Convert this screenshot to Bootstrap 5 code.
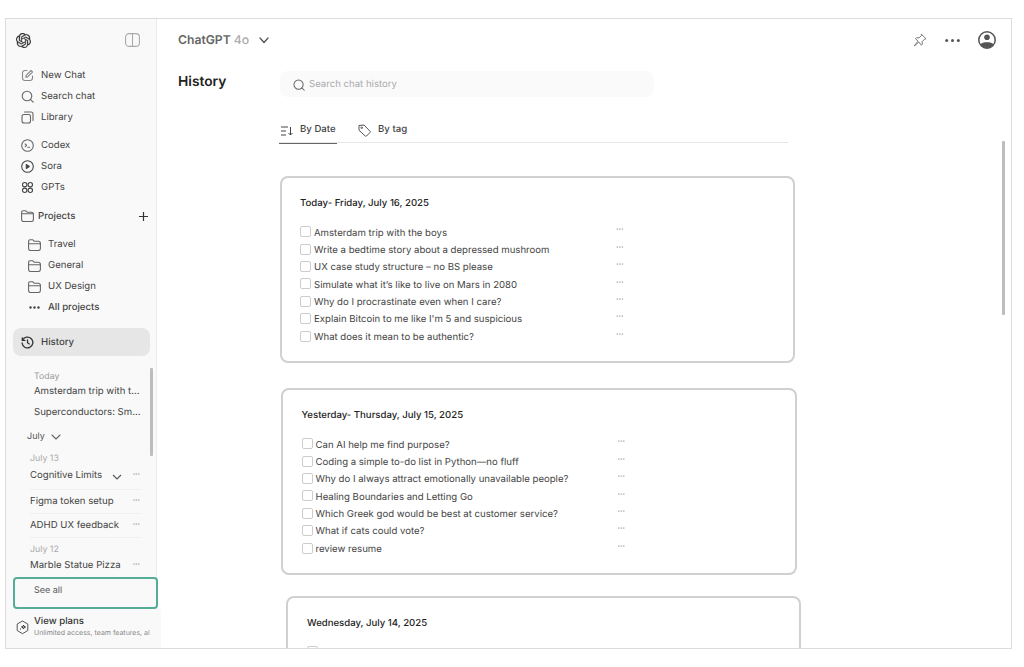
<!DOCTYPE html>
<html lang="en">
<head>
<meta charset="UTF-8">
<meta name="viewport" content="width=device-width, initial-scale=1.0">
<title>History</title>
<link href="https://cdn.jsdelivr.net/npm/bootstrap@5.3.0/dist/css/bootstrap.min.css" rel="stylesheet">
<style>
html, body { height: 100%; overflow: hidden; background: #fff; }
body { font-family: Inter, "Liberation Sans", sans-serif; color: #333; font-size: 9.6px; text-rendering: geometricPrecision; }
svg { display: block; flex: none; }
.ic { fill: none; stroke: #666; stroke-width: 1.1; stroke-linecap: round; stroke-linejoin: round; }
.app-frame { position: relative; width: 1007px; height: 631px; margin: 18px 0 0 5px; border: 1px solid #dcdcdc; overflow: hidden; }
.side-col { width: 151px; flex: none; background: #f9f9f9; border-right: 1px solid #ececec; height: 100%; position: relative; }
.side-top { height: 46px; padding: 0 16px 4px 10px; }
.side-row { height: 21px; padding-left: 15px; padding-top: 2px; gap: 7px; color: #444; white-space: nowrap; }
.side-row svg, .hist-pill svg { margin-bottom: 2px; }
.side-row.proj { padding-left: 15px; gap: 4px; padding-right: 8px; font-weight: 500; }
.side-row.sub { padding-left: 22px; gap: 7px; }
.side-row.allp { font-weight: 500; }
.sect-gap { margin-top: 7px; }
.sect-gap2 { margin-top: 7.5px; }
.hist-pill { height: 28px; margin: 10px 6px 0 7px; padding-left: 8px; padding-top: 2px; gap: 7px; background: #e6e6e6; border-radius: 8px; font-weight: 500; color: #444; }
.hist-day { height: 15px; padding-left: 28px; padding-top: 2px; font-size: 8.8px; color: #999; }
.hist-day.d2 { padding-left: 24px; color: #aaa; }
.hist-item { height: 16px; padding-left: 28px; padding-top: 2px; color: #444; white-space: nowrap; }
.hist-month { height: 16px; padding-left: 21px; gap: 6px; font-size: 9px; color: #555; margin-top: 8px; }
.hist-line { height: 24px; margin: 0 15px 0 24px; padding-top: 2px; border-bottom: 1px solid #efefef; color: #444; white-space: nowrap; }
.hist-line.first { height: 16px; margin-top: 2px; border-bottom: 0; }
.hist-line.second { height: 25px; margin-top: 5px; border-top: 1px solid #efefef; }
.hist-line.last { border-bottom: 0; height: 17px; margin-top: 0; }
.more-dots { color: #666; font-size: 8.500px; line-height: 1; margin-left: auto; margin-right: 1px; position: relative; top: -1px; }
.see-all { height: 32px; width: 145px; margin: 3px 0 0 7px; border: 2px solid #55ad97; border-radius: 4px; background: #f9f9f9; padding: 5px 0 0 19px; font-size: 9px; color: #555; position: relative; }
.plans-box { width: 155px; height: 39px; background: #f9f9f9; padding: 7px 0 0 10px; gap: 5px; }
.plans-name { font-size: 9.6px; font-weight: 500; color: #333; line-height: 12px; }
.plans-sub { font-size: 7px; color: #888; line-height: 9px; width: 117px; overflow: hidden; white-space: nowrap; }
.main-col { min-width: 0; position: relative; }
.top-bar { height: 42px; padding: 0 15px 0 21px; }
.model-name { font-size: 12.2px; font-weight: 600; color: #666; }
.model-name span { font-weight: 500; color: #aaa; }
.page-title { width: 101px; font-size: 13.8px; font-weight: 600; color: #222; padding-top: 1px; line-height: 20px; }
.page-body { padding-left: 21px; padding-top: 10px; min-height: 0; }
.search-box { width: 374px; height: 26px; background: #fafafa; border-radius: 8px; padding-left: 13px; padding-top: 2px; gap: 4px; color: #aaa; margin-left: 1px; }
.tab-bar { width: 509px; margin-top: 20px; height: 26px; border-bottom: 1px solid #e6e6e6; gap: 21px; flex-wrap: nowrap; }
.tab-item { height: 26px; padding-right: 1px; padding-top: 1px; gap: 7px; color: #444; font-weight: 500; white-space: nowrap; }
.tab-item.on { border-bottom: 1px solid #666; height: 27px; width: 58px; padding-left: 2px; gap: 7px; }
.day-card { width: 515px; height: 187px; border: 2px solid #d0d0d0; border-radius: 8px; padding: 18.500px 18.500px 0; background: #fff; flex: none; }
.day-card.c1 { margin: 33px 0 0 1px; padding-left: 18px; }
.day-card.c2 { margin: 25px 0 0 2px; width: 516px; }
.day-card.c3 { margin: 21px 0 0 7px; padding-left: 19px; }
.day-title { font-size: 9.6px; font-weight: 500; color: #222; line-height: 14px; margin-bottom: 14.500px; }
.chat-row { height: 17.4px; color: #444; white-space: nowrap; }
.chat-row .form-check-input { width: 11px; height: 11px; margin: 0 3px 0 0; border-color: #ccc; border-radius: 2px; position: relative; top: -2px; flex: none; }
.chat-name { width: 302px; flex: none; }
.row-dots { color: #666; font-size: 8.500px; line-height: 1; position: relative; top: -3px; }
.scroll-thumb { position: absolute; background: #bdbdbd; width: 3px; border-radius: 1px; }
.scroll-thumb.s1 { left: 144px; top: 349px; height: 88px; }
.scroll-thumb.s2 { left: 996px; top: 122px; height: 174px; }
</style>
</head>
<body>
<div class="app-frame d-flex">

  <aside class="side-col">
    <div class="side-top d-flex align-items-center justify-content-between">
      <svg width="15" height="15" viewBox="0 0 24 24" fill="#333" stroke="#333" stroke-width=".4"><path d="M22.2819 9.8211a5.9847 5.9847 0 0 0-.5157-4.9108 6.0462 6.0462 0 0 0-6.5098-2.9A6.0651 6.0651 0 0 0 4.9807 4.1818a5.9847 5.9847 0 0 0-3.9977 2.9 6.0462 6.0462 0 0 0 .7427 7.0966 5.98 5.98 0 0 0 .511 4.9107 6.051 6.051 0 0 0 6.5146 2.9001A5.9847 5.9847 0 0 0 13.2599 24a6.0557 6.0557 0 0 0 5.7718-4.2058 5.9894 5.9894 0 0 0 3.9977-2.9001 6.0557 6.0557 0 0 0-.7475-7.0729zm-9.022 12.6081a4.4755 4.4755 0 0 1-2.8764-1.0408l.1419-.0804 4.7783-2.7582a.7948.7948 0 0 0 .3927-.6813v-6.7369l2.02 1.1686a.071.071 0 0 1 .038.052v5.5826a4.504 4.504 0 0 1-4.4945 4.4944zm-9.6607-4.1254a4.4708 4.4708 0 0 1-.5346-3.0137l.142.0852 4.783 2.7582a.7712.7712 0 0 0 .7806 0l5.8428-3.3685v2.3324a.0804.0804 0 0 1-.0332.0615L9.74 19.9502a4.4992 4.4992 0 0 1-6.1408-1.6464zM2.3408 7.8956a4.485 4.485 0 0 1 2.3655-1.9728V11.6a.7664.7664 0 0 0 .3879.6765l5.8144 3.3543-2.0201 1.1685a.0757.0757 0 0 1-.071 0l-4.8303-2.7865A4.504 4.504 0 0 1 2.3408 7.872zm16.5963 3.8558L13.1038 8.364 15.1192 7.2a.0757.0757 0 0 1 .071 0l4.8303 2.7913a4.4944 4.4944 0 0 1-.6765 8.1042v-5.6772a.79.79 0 0 0-.407-.667zm2.0107-3.0231l-.142-.0852-4.7735-2.7818a.7759.7759 0 0 0-.7854 0L9.409 9.2297V6.8974a.0662.0662 0 0 1 .0284-.0615l4.8303-2.7866a4.4992 4.4992 0 0 1 6.6802 4.66zM8.3065 12.863l-2.02-1.1638a.0804.0804 0 0 1-.038-.0567V6.0742a4.4992 4.4992 0 0 1 7.3757-3.4537l-.142.0805L8.704 5.459a.7948.7948 0 0 0-.3927.6813zm1.0976-2.3654l2.602-1.4998 2.6069 1.4998v2.9994l-2.5974 1.4997-2.6067-1.4997Z"/></svg>
      <svg width="15" height="14" viewBox="0 0 15 14" class="ic" style="stroke:#aaa"><rect x=".6" y=".6" width="13.8" height="12.8" rx="3.5"/><path d="M7.5.6v12.8"/></svg>
    </div>

    <div class="side-row d-flex align-items-center"><svg width="13" height="13" viewBox="0 0 13 13" class="ic" style="stroke:#888"><path d="M6 1.500H4A2.500 2.500 0 0 0 1.500 4v5A2.500 2.500 0 0 0 4 11.500h5A2.500 2.500 0 0 0 11.500 9V7"/><path d="M4.800 8.300l.4-2L10 1.500l1.500 1.500-4.800 4.900z"/></svg>New Chat</div>
    <div class="side-row d-flex align-items-center"><svg width="13" height="13" viewBox="0 0 13 13" class="ic"><circle cx="6" cy="6" r="4.800"/><path d="M9.600 9.600l2.600 2.600"/></svg>Search chat</div>
    <div class="side-row d-flex align-items-center"><svg width="13" height="13" viewBox="0 0 13 13" class="ic"><rect x="1" y="3.500" width="8.500" height="8.500" rx="2"/><path d="M3.500 1h6.500A2 2 0 0 1 12 3v6.500"/></svg>Library</div>

    <div class="side-row sect-gap d-flex align-items-center"><svg width="13" height="13" viewBox="0 0 13 13" class="ic"><circle cx="6.500" cy="6.500" r="5.800"/><path d="M4.200 5l1.400 1.400-1.400 1.300M6.800 8.300h1.700"/></svg>Codex</div>
    <div class="side-row d-flex align-items-center"><svg width="13" height="13" viewBox="0 0 13 13" class="ic" style="stroke:#444"><circle cx="6.500" cy="6.500" r="5.800"/><path d="M5.300 4.500l3 2-3 2z" fill="#444"/></svg>Sora</div>
    <div class="side-row d-flex align-items-center"><svg width="13" height="13" viewBox="0 0 13 13" class="ic" style="stroke:#444"><circle cx="3.700" cy="3.700" r="2.200"/><circle cx="9.300" cy="3.700" r="2.200"/><circle cx="3.700" cy="9.300" r="2.200"/><circle cx="9.300" cy="9.300" r="2.200"/></svg>GPTs</div>

    <div class="side-row proj sect-gap2 d-flex align-items-center"><svg width="13" height="12" viewBox="0 0 13 12" class="ic"><path d="M.6 3V2.200A1.500 1.500 0 0 1 2.100.7h2.500l1.500 1.500h4.300a2 2 0 0 1 2 2v5.300a2 2 0 0 1-2 2H2.600a2 2 0 0 1-2-2z"/><path d="M.6 3.800h11.800"/></svg><span>Projects</span><svg class="ms-auto" width="9" height="9" viewBox="0 0 9 9" fill="none" stroke="#333" stroke-width="1.200"><path d="M4.500 0v9M0 4.500h9"/></svg></div>

    <div class="side-row sub sect-gap2 d-flex align-items-center"><svg width="13" height="12" viewBox="0 0 13 12" class="ic"><path d="M.6 3V2.200A1.500 1.500 0 0 1 2.100.7h2.500l1.500 1.500h4.300a2 2 0 0 1 2 2v5.300a2 2 0 0 1-2 2H2.600a2 2 0 0 1-2-2z"/><path d="M.6 4.800h11.800"/></svg>Travel</div>
    <div class="side-row sub d-flex align-items-center"><svg width="13" height="12" viewBox="0 0 13 12" class="ic"><path d="M.6 3V2.200A1.500 1.500 0 0 1 2.100.7h2.500l1.500 1.500h4.300a2 2 0 0 1 2 2v5.300a2 2 0 0 1-2 2H2.600a2 2 0 0 1-2-2z"/><path d="M.6 4.800h11.800"/></svg>General</div>
    <div class="side-row sub d-flex align-items-center"><svg width="13" height="12" viewBox="0 0 13 12" class="ic"><path d="M.6 3V2.200A1.500 1.500 0 0 1 2.100.7h2.500l1.500 1.500h4.300a2 2 0 0 1 2 2v5.300a2 2 0 0 1-2 2H2.600a2 2 0 0 1-2-2z"/><path d="M.6 4.800h11.800"/></svg>UX Design</div>
    <div class="side-row sub allp d-flex align-items-center"><svg width="13" height="3" viewBox="0 0 13 3" fill="#444"><circle cx="2.500" cy="1.500" r="1.200"/><circle cx="6.500" cy="1.500" r="1.200"/><circle cx="10.500" cy="1.500" r="1.200"/></svg>All projects</div>

    <div class="hist-pill d-flex align-items-center"><svg width="13" height="13" viewBox="0 0 13 13" class="ic" style="stroke:#333;stroke-width:1.300"><path d="M1.600 4.200A5.400 5.400 0 1 1 1.100 7"/><path d="M1.300 1.800v2.600h2.600M6.500 3.800v3l1.800 1.200"/></svg>History</div>

    <div class="hist-day d-flex align-items-center" style="margin-top:12.500px">Today</div>
    <div class="hist-item d-flex align-items-center">Amsterdam trip with t...</div>
    <div class="hist-item d-flex align-items-center" style="margin-top:5px">Superconductors: Sm...</div>
    <div class="hist-month d-flex align-items-center">July <svg width="10" height="6" viewBox="0 0 10 6" class="ic"><path d="M1 1l4 4 4-4"/></svg></div>
    <div class="hist-day d2 d-flex align-items-center" style="margin-top:6px">July 13</div>
    <div class="hist-line first d-flex align-items-center">Cognitive Limits<svg style="margin-left:10px" width="10" height="6" viewBox="0 0 10 6" fill="none" stroke="#555" stroke-width="1.100"><path d="M1 1l4 4 4-4"/></svg><span class="more-dots">···</span></div>
    <div class="hist-line second d-flex align-items-center">Figma token setup<span class="more-dots">···</span></div>
    <div class="hist-line d-flex align-items-center">ADHD UX feedback<span class="more-dots">···</span></div>
    <div class="hist-day d2 d-flex align-items-center" style="margin-top:4px">July 12</div>
    <div class="hist-line last d-flex align-items-center">Marble Statue Pizza<span class="more-dots">···</span></div>

    <div class="see-all">See all</div>
    <div class="plans-box d-flex">
      <svg class="mt-1" width="13" height="15" viewBox="0 0 13 15" fill="none" stroke="#555" stroke-width="1"><path d="M6.500 1l5.300 3v6.500l-5.300 3.200L1.200 10.500V4z"/><path d="M7.500 5l.5 1.500L9.500 7 8 7.500 7.500 9 7 7.500 5.500 7 7 6.500zM4.500 8.500v1" stroke="#333"/></svg>
      <div>
        <div class="plans-name">View plans</div>
        <div class="plans-sub">Unlimited access, team features, al</div>
      </div>
    </div>
    <div class="scroll-thumb s1"></div>
  </aside>

  <main class="main-col flex-grow-1 d-flex flex-column">
    <div class="top-bar d-flex align-items-center flex-shrink-0">
      <div class="model-name">ChatGPT <span>4o</span></div>
      <svg style="margin-left:10px" width="10" height="7" viewBox="0 0 10 7" fill="none" stroke="#555" stroke-width="1.300" stroke-linecap="round" stroke-linejoin="round"><path d="M1 1l4 4.500L9 1"/></svg>
      <svg class="ms-auto" width="14" height="14" viewBox="0 0 14 14" fill="none" stroke="#777" stroke-width="1" stroke-linejoin="round"><path d="M8.200 1l4.800 4.800-1.300.3-2.600 2.600.2 2.500-1 1L5.800 9 1.200 13 5 8.200 2.500 5.700l1-1 2.500.2L8.600 2.300z"/></svg>
      <svg style="margin-left:18px" width="15" height="3" viewBox="0 0 15 3" fill="#555"><circle cx="1.700" cy="1.500" r="1.500"/><circle cx="7.500" cy="1.500" r="1.500"/><circle cx="13.300" cy="1.500" r="1.500"/></svg>
      <svg style="margin-left:18px" width="18" height="18" viewBox="0 0 18 18"><circle cx="9" cy="9" r="8.200" fill="#fff" stroke="#555" stroke-width="1.500"/><path d="M2.200 13.400A8.200 8.200 0 0 0 15.800 13.400C14.500 11.700 12 11.200 9 11.200S3.500 11.700 2.200 13.400z" fill="#555"/><circle cx="9" cy="6.300" r="2.800" fill="#555"/></svg>
    </div>

    <div class="page-body d-flex flex-grow-1">
      <h1 class="page-title m-0 flex-shrink-0">History</h1>
      <div class="d-flex flex-column flex-shrink-0">
        <div class="search-box d-flex align-items-center flex-shrink-0">
          <svg width="12" height="12" viewBox="0 0 13 13" class="ic"><circle cx="6" cy="6" r="5"/><path d="M9.800 9.800l2.400 2.400"/></svg>
          Search chat history
        </div>
        <div class="tab-bar d-flex flex-shrink-0">
          <div class="tab-item on d-flex align-items-center">
            <svg width="12" height="10" viewBox="0 0 12 10" fill="none" stroke="#444" stroke-width="1"><path d="M0 1h7M0 5h5M0 9h5M9.500 1v8M7.500 7l2 2 2-2"/></svg>
            <span>By Date</span>
          </div>
          <div class="tab-item d-flex align-items-center">
            <svg width="13" height="13" viewBox="0 0 13 13" fill="none" stroke="#555" stroke-width="1" stroke-linejoin="round"><path d="M1 1.500L6 1l6 6.200a1 1 0 0 1 0 1.300L8.500 12a1 1 0 0 1-1.300 0L1 6.200z"/><circle cx="3.700" cy="3.700" r=".8"/></svg>
            <span>By tag</span>
          </div>
        </div>

        <section class="day-card c1">
          <div class="day-title">Today- Friday, July 16, 2025</div>
          <div class="chat-row d-flex align-items-center"><input class="form-check-input" type="checkbox"><span class="chat-name">Amsterdam trip with the boys</span><span class="row-dots">···</span></div>
          <div class="chat-row d-flex align-items-center"><input class="form-check-input" type="checkbox"><span class="chat-name">Write a bedtime story about a depressed mushroom</span><span class="row-dots">···</span></div>
          <div class="chat-row d-flex align-items-center"><input class="form-check-input" type="checkbox"><span class="chat-name">UX case study structure – no BS please</span><span class="row-dots">···</span></div>
          <div class="chat-row d-flex align-items-center"><input class="form-check-input" type="checkbox"><span class="chat-name">Simulate what it’s like to live on Mars in 2080</span><span class="row-dots">···</span></div>
          <div class="chat-row d-flex align-items-center"><input class="form-check-input" type="checkbox"><span class="chat-name">Why do I procrastinate even when I care?</span><span class="row-dots">···</span></div>
          <div class="chat-row d-flex align-items-center"><input class="form-check-input" type="checkbox"><span class="chat-name">Explain Bitcoin to me like I'm 5 and suspicious</span><span class="row-dots">···</span></div>
          <div class="chat-row d-flex align-items-center"><input class="form-check-input" type="checkbox"><span class="chat-name">What does it mean to be authentic?</span><span class="row-dots">···</span></div>
        </section>

        <section class="day-card c2">
          <div class="day-title">Yesterday- Thursday, July 15, 2025</div>
          <div class="chat-row d-flex align-items-center"><input class="form-check-input" type="checkbox"><span class="chat-name">Can AI help me find purpose?</span><span class="row-dots">···</span></div>
          <div class="chat-row d-flex align-items-center"><input class="form-check-input" type="checkbox"><span class="chat-name">Coding a simple to-do list in Python—no fluff</span><span class="row-dots">···</span></div>
          <div class="chat-row d-flex align-items-center"><input class="form-check-input" type="checkbox"><span class="chat-name">Why do I always attract emotionally unavailable people?</span><span class="row-dots">···</span></div>
          <div class="chat-row d-flex align-items-center"><input class="form-check-input" type="checkbox"><span class="chat-name">Healing Boundaries and Letting Go</span><span class="row-dots">···</span></div>
          <div class="chat-row d-flex align-items-center"><input class="form-check-input" type="checkbox"><span class="chat-name">Which Greek god would be best at customer service?</span><span class="row-dots">···</span></div>
          <div class="chat-row d-flex align-items-center"><input class="form-check-input" type="checkbox"><span class="chat-name">What if cats could vote?</span><span class="row-dots">···</span></div>
          <div class="chat-row d-flex align-items-center"><input class="form-check-input" type="checkbox"><span class="chat-name">review resume</span><span class="row-dots">···</span></div>
        </section>

        <section class="day-card c3">
          <div class="day-title">Wednesday, July 14, 2025</div>
          <div class="chat-row d-flex align-items-center"><input class="form-check-input" type="checkbox"></div>
        </section>
      </div>
    </div>
  </main>
  <div class="scroll-thumb s2"></div>
</div>
<script src="https://cdn.jsdelivr.net/npm/bootstrap@5.3.0/dist/js/bootstrap.bundle.min.js"></script>
</body>
</html>
